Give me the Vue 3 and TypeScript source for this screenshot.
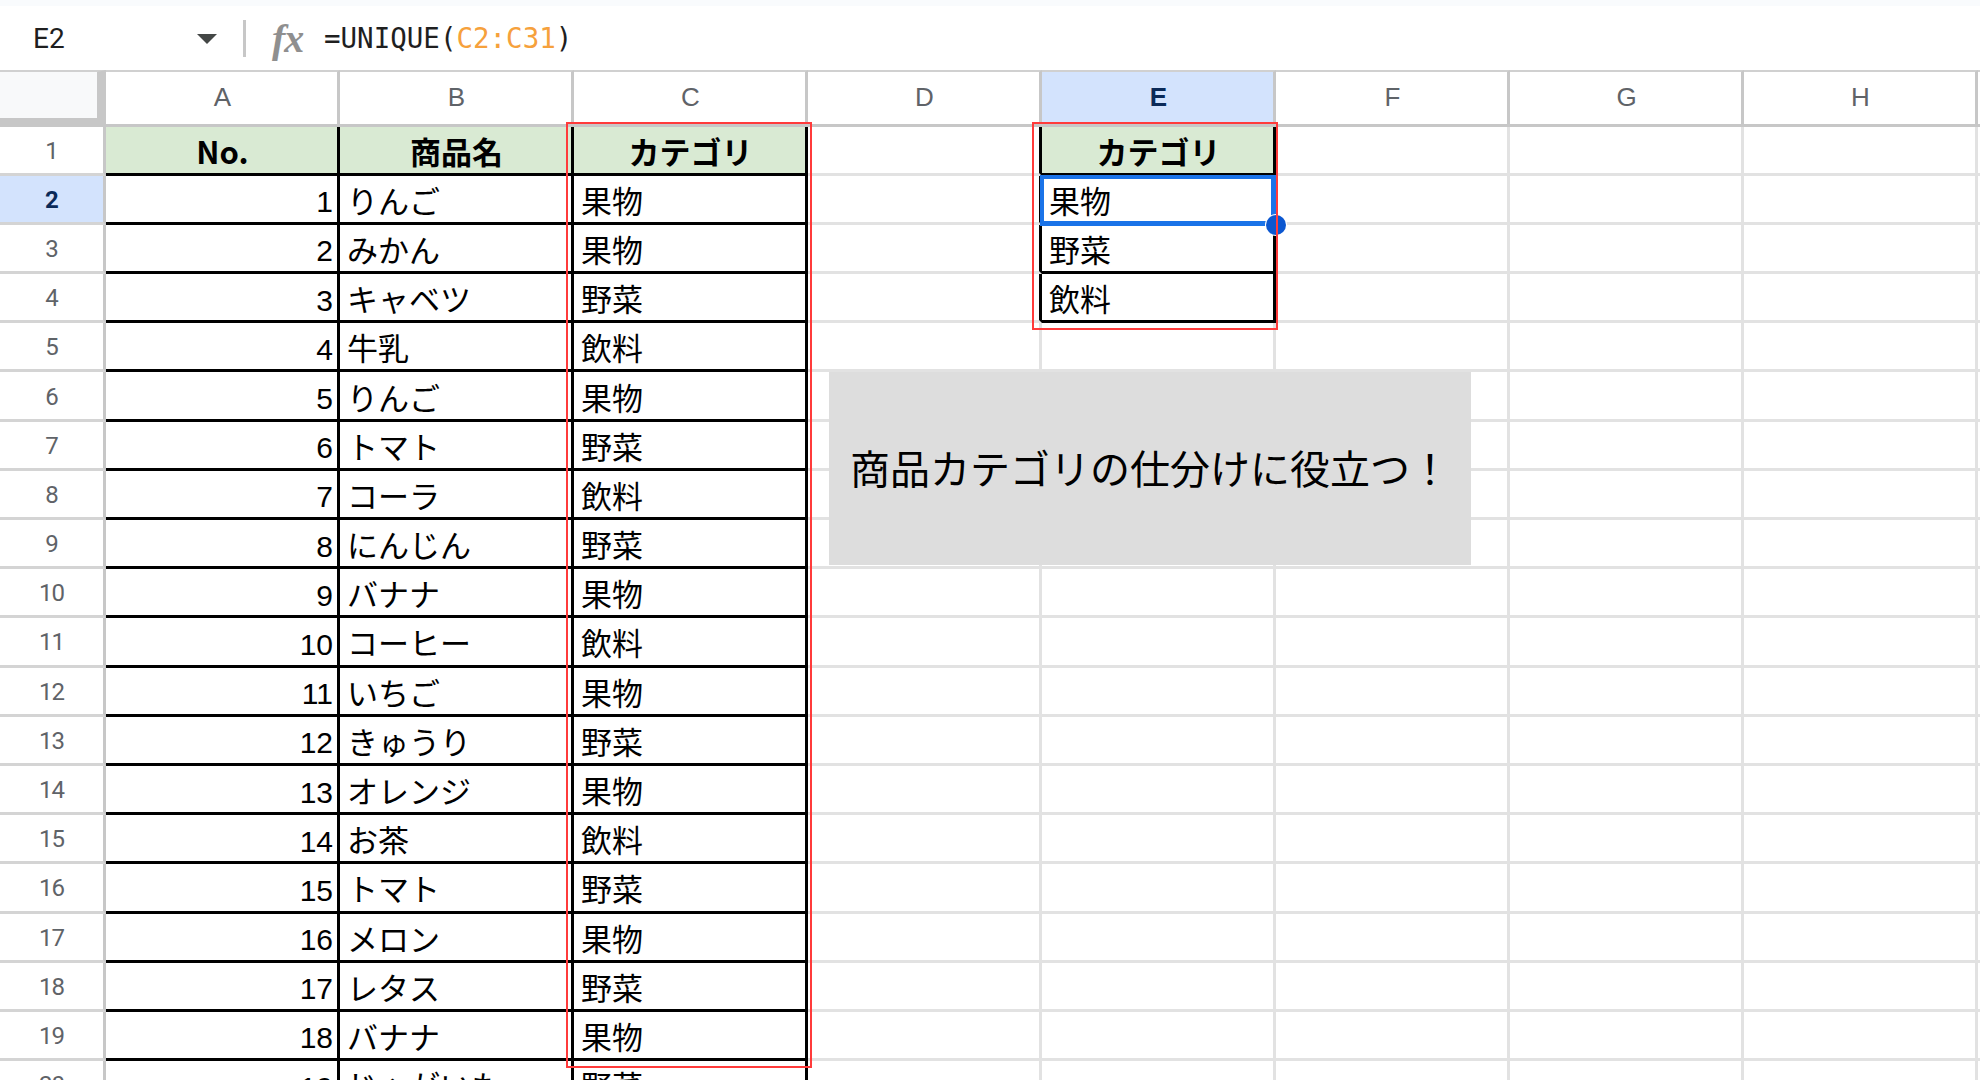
<script setup lang="ts">
const columns: string[] = ['A', 'B', 'C', 'D', 'E', 'F', 'G', 'H', '']
const items: [string, string, string][] = [
  ['No.', '商品名', 'カテゴリ'],
  ['1', 'りんご', '果物'],
  ['2', 'みかん', '果物'],
  ['3', 'キャベツ', '野菜'],
  ['4', '牛乳', '飲料'],
  ['5', 'りんご', '果物'],
  ['6', 'トマト', '野菜'],
  ['7', 'コーラ', '飲料'],
  ['8', 'にんじん', '野菜'],
  ['9', 'バナナ', '果物'],
  ['10', 'コーヒー', '飲料'],
  ['11', 'いちご', '果物'],
  ['12', 'きゅうり', '野菜'],
  ['13', 'オレンジ', '果物'],
  ['14', 'お茶', '飲料'],
  ['15', 'トマト', '野菜'],
  ['16', 'メロン', '果物'],
  ['17', 'レタス', '野菜'],
  ['18', 'バナナ', '果物'],
  ['19', 'じゃがいも', '野菜'],
]
const unique: string[] = ['カテゴリ', '果物', '野菜', '飲料']

interface Cell {
  text: string
  cls: string[]
}

function rowCells(r: number): Cell[] {
  const out: Cell[] = []
  const head = r === 0
  const last = r === items.length - 1
  const row = items[r]
  for (let c = 0; c < 9; c++) {
    const cls: string[] = ['cell']
    let text = ''
    if (c < 3) {
      text = row[c]
      cls.push('black-right')
      if (!last) cls.push('black-bottom')
      if (head) cls.push('head')
      else if (c === 0) cls.push('num')
    }
    if (c === 3 && r < 4) cls.push('black-right')
    if (c === 4 && r < 4) {
      text = unique[r]
      cls.push('black-right', 'black-bottom')
      if (head) cls.push('head')
    }
    out.push({ text, cls })
  }
  return out
}
const rows = items.map((_, r) => rowCells(r))
</script>

<template>
  <div class="page">
    <div class="topband"></div>
    <div class="formula-bar">
      <div class="name-box">E2</div>
      <div class="caret"></div>
      <div class="divider"></div>
      <div class="fx">fx</div>
      <div class="formula">=UNIQUE(<span class="range">C2:C31</span>)</div>
    </div>
    <div class="sheet">
      <div class="corner"></div>
      <div
        v-for="(col, i) in columns"
        :key="'c' + i"
        class="col-head"
        :class="{ active: col === 'E' }"
      >{{ col }}</div>
      <template v-for="(row, r) in rows" :key="'r' + r">
        <div class="row-head" :class="{ active: r === 1 }">{{ r + 1 }}</div>
        <div v-for="(cell, c) in row" :key="c" :class="cell.cls"><span>{{ cell.text }}</span></div>
      </template>
    </div>
    <div class="callout">商品カテゴリの仕分けに役立つ！</div>
    <div class="selection"></div>
    <div class="handle"></div>
    <div class="red red-c"></div>
    <div class="red red-e"></div>
  </div>
</template>

<style>
html, body { margin: 0; background: #fff; overflow: hidden; }
</style>

<style scoped>
.page {
  position: relative;
  width: 1980px;
  height: 1080px;
  overflow: hidden;
  background: #fff;
  font-family: "Noto Sans CJK JP", "Liberation Sans", sans-serif;
  color: #000;
}
.topband { height: 6px; background: #f9fbfd; }
.formula-bar {
  height: 64px;
  display: flex;
  align-items: center;
  box-sizing: border-box;
  padding-left: 33px;
}
.name-box {
  width: 164px;
  font: 28px Roboto, sans-serif;
  color: #1f1f1f;
}
.caret {
  width: 0;
  height: 0;
  border-left: 10px solid transparent;
  border-right: 10px solid transparent;
  border-top: 10px solid #444746;
  margin-top: 1px;
}
.divider {
  width: 3px;
  height: 37px;
  background: #c7c7c7;
  margin-left: 26px;
  margin-top: 1px;
}
.fx {
  font: italic bold 40px "Liberation Serif", serif;
  color: #8f8f8f;
  margin-left: 26px;
  width: 52px;
  letter-spacing: -1px;
}
.formula {
  font: 27.5px "DejaVu Sans Mono", monospace;
  color: #1f1f1f;
}
.range { color: #f6a13c; }
.sheet {
  display: grid;
  grid-template-columns: 106px repeat(8, 234px) 1fr;
  grid-template-rows: 56.5px;
  grid-auto-rows: 49.2px;
}
.corner {
  box-sizing: border-box;
  background: #f8f9fa;
  border-top: 2px solid #d0d0d0;
  border-right: 9px solid #c7c7c7;
  border-bottom: 9px solid #c7c7c7;
}
.col-head {
  box-sizing: border-box;
  display: flex;
  align-items: center;
  justify-content: center;
  padding-left: 2px;
  border-top: 2px solid #d0d0d0;
  border-right: 3px solid #c7c7c7;
  border-bottom: 3px solid #c7c7c7;
  font: 26px "Liberation Sans", sans-serif;
  color: #5f6368;
}
.col-head.active {
  background: #d3e3fd;
  color: #0b2a58;
  font-weight: bold;
}
.row-head {
  box-sizing: border-box;
  display: flex;
  align-items: center;
  justify-content: center;
  padding-top: 2px;
  border-right: 3px solid #c7c7c7;
  border-bottom: 3px solid #d4d4d4;
  font: 24px Roboto, sans-serif;
  letter-spacing: -1px;
  color: #5f6368;
  overflow: hidden;
}
.row-head.active {
  background: #d3e3fd;
  color: #0b2a58;
  font-weight: bold;
}
.cell {
  box-sizing: border-box;
  display: flex;
  align-items: center;
  padding: 1px 0 0 7px;
  border-right: 3px solid #e2e2e2;
  border-bottom: 3px solid #e2e2e2;
  font-size: 31px;
  line-height: 1;
  white-space: nowrap;
  overflow: hidden;
  background: #fff;
}
.cell.black-right { border-right-color: #000; }
.cell.black-bottom { border-bottom-color: #000; }
.cell.head {
  justify-content: center;
  background: #d9ead3;
  font-weight: bold;
  padding: 1px 0 0 2px;
}
.cell.num {
  justify-content: flex-end;
  padding: 7px 4px 0 0;
  font-family: "Liberation Sans", sans-serif;
  font-size: 30px;
}
.callout {
  position: absolute;
  left: 829px;
  top: 372px;
  width: 642px;
  height: 193px;
  box-sizing: border-box;
  display: flex;
  align-items: center;
  padding: 0 0 4px 21px;
  background: #dddddd;
  font-size: 40px;
  line-height: 1;
  white-space: nowrap;
  color: #000;
}
.selection {
  position: absolute;
  left: 1040px;
  top: 175px;
  width: 236px;
  height: 51px;
  box-sizing: border-box;
  border-style: solid;
  border-color: #1a73e8;
  border-width: 4px 5px 5px 4px;
}
.handle {
  position: absolute;
  left: 1266px;
  top: 215px;
  width: 20px;
  height: 20px;
  box-sizing: border-box;
  border-radius: 50%;
  background: #0b57d0;
  box-shadow: 0 0 0 1px #fff;
}
.red {
  position: absolute;
  box-sizing: border-box;
  border: 2px solid #ff3b3b;
}
.red-c { left: 566px; top: 122px; width: 246px; height: 946px; }
.red-e { left: 1032px; top: 122px; width: 246px; height: 208px; }
</style>
